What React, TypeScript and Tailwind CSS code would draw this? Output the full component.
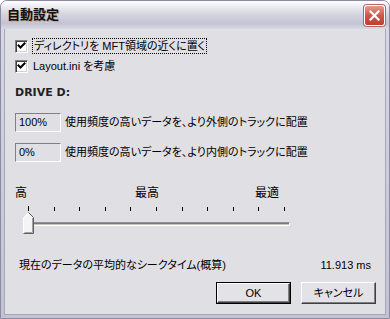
import React from "react";

const ticks = Array.from({ length: 11 });

function CheckBox() {
  return (
    <span className="flex h-[13px] w-[13px] shrink-0 items-center justify-center border border-t-[#808080] border-l-[#808080] border-b-white border-r-white bg-white shadow-[inset_1px_1px_0_#404040,inset_-1px_-1px_0_#d4d0c8]">
      <svg width="9" height="9" viewBox="0 0 9 9">
        <path d="M1.5 3.5 L3.5 5.5 L7.5 1.5" stroke="black" strokeWidth="2" fill="none" strokeLinecap="square" />
      </svg>
    </span>
  );
}

function ValueBox({ value }: { value: string }) {
  return (
    <div className="flex h-[19px] w-[46px] shrink-0 items-center border border-t-[#808080] border-l-[#808080] border-b-white border-r-white pl-[3px] text-[11px] font-['Liberation_Sans',sans-serif]">
      {value}
    </div>
  );
}

function Thumb() {
  return (
    <svg width="11" height="22" viewBox="0 0 11 22" className="absolute left-[8px] top-0">
      <path d="M5.5 0.5 L10.5 5.5 L10.5 21.5 L0.5 21.5 L0.5 5.5 Z" fill="#f4f4f4" />
      <path d="M0.5 21 L0.5 5.5 L5.5 0.5" stroke="white" fill="none" />
      <path d="M5.5 0.5 L10.5 5.5 L10.5 21.5 L0.5 21.5" stroke="#606060" fill="none" />
      <path d="M9.5 6 L9.5 20.5 L1.5 20.5" stroke="#a0a0a0" fill="none" />
    </svg>
  );
}

function Button({ label, primary }: { label: string; primary?: boolean }) {
  return (
    <div
      className={`flex h-[22px] w-[75px] items-center justify-center bg-[#e3e2e6] ${
        primary ? "border border-black" : ""
      }`}
    >
      <div className="flex h-full w-full items-center justify-center border border-t-white border-l-white border-b-[#404040] border-r-[#404040] shadow-[inset_-1px_-1px_0_#808080]">
        {label}
      </div>
    </div>
  );
}

export default function App() {
  return (
    <div className="h-[319px] w-[390px] bg-white font-['Liberation_Sans','Noto_Sans_CJK_JP',sans-serif] text-[11px] text-black [font-feature-settings:'palt']">
      <div className="flex h-full flex-col overflow-hidden rounded-t-[7px] border border-[#8c8ba3] bg-[linear-gradient(to_bottom,#d9d8e4,#c3c2d3)]">
        {/* title bar */}
        <div className="flex h-[28px] shrink-0 items-center justify-between bg-[linear-gradient(to_bottom,#ffffff_0%,#ebebf1_20%,#d3d3df_50%,#c4c3d4_80%,#d8d8e3_100%)] pl-[6px] pr-[4px]">
          <span className="text-[13px] font-bold text-[#101010] [text-shadow:1px_1px_0_#b8a888]">自動設定</span>
          <div className="flex h-[21px] w-[21px] items-center justify-center rounded-[3px] border border-white bg-[linear-gradient(to_bottom,#e79a8c,#d0564a_50%,#c13c32)] shadow-[0_0_0_1px_#a86a6a]">
            <svg width="11" height="11" viewBox="0 0 11 11">
              <path d="M1.5 1.5 L9.5 9.5 M9.5 1.5 L1.5 9.5" stroke="white" strokeWidth="2.2" strokeLinecap="square" />
            </svg>
          </div>
        </div>

        {/* body */}
        <div className="mx-[3px] mb-[3px] flex flex-1 flex-col border-l border-r border-b border-[#a8a7ba] bg-[#e0dfe3] pl-[10px]">
          <div className="mt-[9px] flex h-[16px] items-center gap-[4px]">
            <CheckBox />
            <span className="border border-dotted border-black px-[1px] leading-[14px]">ディレクトリを MFT領域の近くに置く</span>
          </div>
          <div className="mt-[4px] flex h-[16px] items-center gap-[5px]">
            <CheckBox />
            <span>Layout.ini を考慮</span>
          </div>

          <div className="mt-[11px] h-[16px] font-['DejaVu_Sans',sans-serif] text-[11px] font-bold leading-[16px] text-[#222]">DRIVE D:</div>

          <div className="mt-[12px] flex items-center gap-[4px]">
            <ValueBox value="100%" />
            <span>使用頻度の高いデータを、より外側のトラックに配置</span>
          </div>
          <div className="mt-[11px] flex items-center gap-[4px]">
            <ValueBox value="0%" />
            <span>使用頻度の高いデータを、より内側のトラックに配置</span>
          </div>

          <div className="mt-[23px] grid h-[16px] grid-cols-[120px_120px_auto] text-[12px] leading-[16px]">
            <span>高</span>
            <span>最高</span>
            <span>最適</span>
          </div>

          <div className="ml-[13px] mt-[6px] flex h-[4px] w-[257px] items-end justify-between">
            {ticks.map((_, i) => (
              <span key={i} className={`w-px bg-black ${i === 0 ? "h-[5px]" : "h-[4px]"}`} />
            ))}
          </div>

          <div className="relative mt-[1px] h-[22px] w-[280px]">
            <div className="absolute left-[8px] top-[10px] h-[4px] w-[267px] border border-t-[#909090] border-l-[#909090] border-b-white border-r-white bg-[#c8c6bc] shadow-[inset_0_1px_0_#7a7a7a]" />
            <Thumb />
          </div>

          <div className="mt-[23px] flex h-[16px] items-center justify-between pl-[4px] pr-[14px]">
            <span>現在のデータの平均的なシークタイム(概算)</span>
            <span className="font-['Liberation_Sans',sans-serif] text-[11px]">11.913 ms</span>
          </div>

          <div className="mr-[9px] mt-[9px] flex justify-end gap-[10px]">
            <Button label="OK" primary />
            <Button label="キャンセル" />
          </div>
        </div>
      </div>
    </div>
  );
}
